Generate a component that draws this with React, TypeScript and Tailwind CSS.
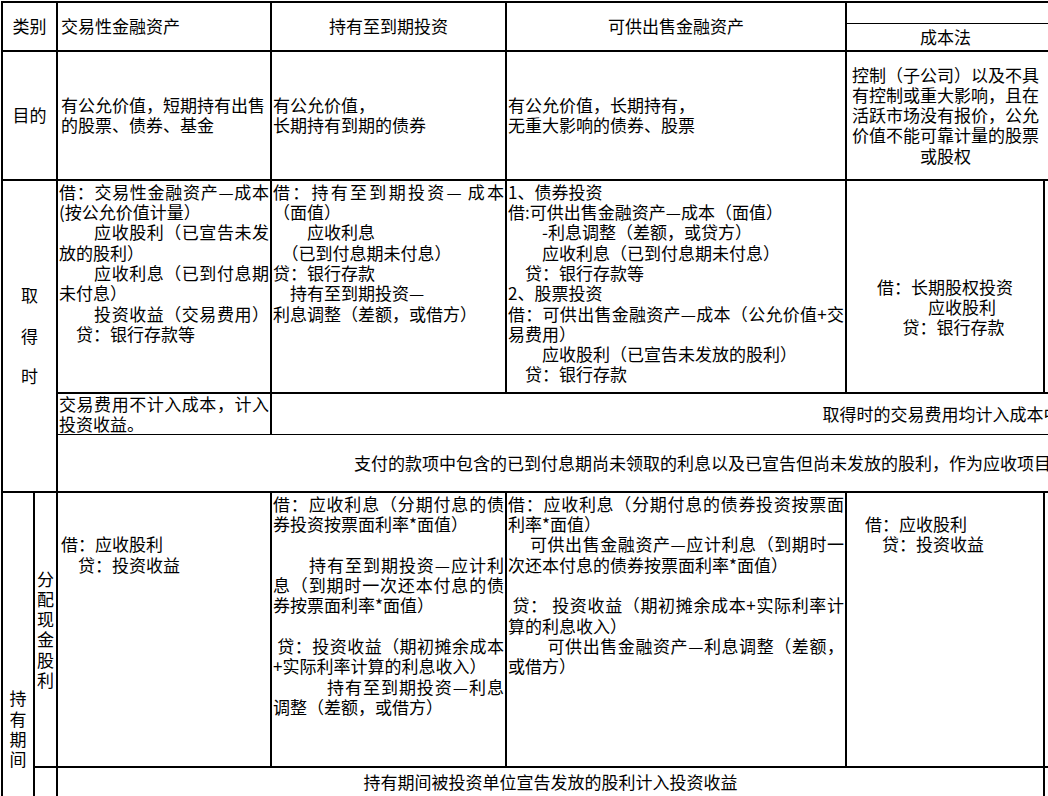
import React from 'react'

// "~" at the start of a line = justified to the full cell width (Excel distributed look)
function Lines({ lines, className = '' }: { lines: string[]; className?: string }) {
  return (
    <div className={className}>
      {lines.map((l, i) => {
        const just = l.startsWith('~')
        const t = just ? l.slice(1) : l
        return (
          <div
            key={i}
            className={just ? 'whitespace-nowrap text-justify [text-align-last:justify]' : 'whitespace-nowrap'}
          >
            {t === '' ? '\u00a0' : t}
          </div>
        )
      })}
    </div>
  )
}

const td = 'border-2 border-black p-0 px-px'
const H = '\u00a0'

export default function App() {
  return (
    <div className="w-[1048px] h-[796px] overflow-hidden bg-white pl-px pt-px text-black font-['Noto_Sans_CJK_SC',sans-serif] text-[17px] leading-[20.3px]">
      <table className="table-fixed border-collapse w-[1609px]">
        <colgroup>
          <col className="w-[32px]" />
          <col className="w-[23px]" />
          <col className="w-[214px]" />
          <col className="w-[235px]" />
          <col className="w-[340px]" />
          <col className="w-[198px]" />
          <col className="w-[567px]" />
        </colgroup>
        <tbody>
          {/* header */}
          <tr className="h-[21px]">
            <td rowSpan={2} colSpan={2} className={`${td} text-center align-middle`}>类别</td>
            <td rowSpan={2} className={`${td} align-middle pl-[3px]`}>交易性金融资产</td>
            <td rowSpan={2} className={`${td} text-center align-middle`}>持有至到期投资</td>
            <td rowSpan={2} className={`${td} text-center align-middle`}>可供出售金融资产</td>
            <td colSpan={2} className={`${td} border-b border-r-0 text-center align-middle`}>长期股权投资</td>
          </tr>
          <tr className="h-[27px]">
            <td className={`${td} border-t border-r-0 text-center align-middle`}>成本法</td>
            <td className={`${td} border-t border-l-0 text-center align-middle`}>权益法</td>
          </tr>

          {/* 目的 */}
          <tr className="h-[129px]">
            <td colSpan={2} className={`${td} text-center align-middle`}>目的</td>
            <td className={`${td} align-middle pl-[3px]`}>
              <Lines lines={['有公允价值，短期持有出售', '的股票、债券、基金']} />
            </td>
            <td className={`${td} align-middle`}>
              <Lines lines={['有公允价值，', '长期持有到期的债券']} />
            </td>
            <td className={`${td} align-middle`}>
              <Lines lines={['有公允价值，长期持有，', '无重大影响的债券、股票']} />
            </td>
            <td className={`${td} border-r-0 text-center align-middle`}>
              <Lines
                lines={[
                  '控制（子公司）以及不具',
                  '有控制或重大影响，且在',
                  '活跃市场没有报价，公允',
                  '价值不能可靠计量的股票',
                  '或股权',
                ]}
              />
            </td>
            <td className={`${td} border-l-0 align-middle`}></td>
          </tr>

          {/* 取得时 */}
          <tr className="h-[213px]">
            <td rowSpan={3} colSpan={2} className={`${td} text-center align-middle`}>
              <Lines lines={['取', '', '得', '', '时']} />
            </td>
            <td className={`${td} align-top pt-[1px]`}>
              <Lines
                lines={[
                  '~借：交易性金融资产—成本',
                  '(按公允价值计量）',
                  '~　　应收股利（已宣告未发',
                  '放的股利）',
                  '~　　应收利息（已到付息期',
                  '未付息）',
                  '~　　投资收益（交易费用）',
                  '　贷：银行存款等',
                ]}
              />
            </td>
            <td className={`${td} align-top pt-[1px]`}>
              <Lines
                lines={[
                  '~借：持有至到期投资—' + H + '成本',
                  '（面值）',
                  '　　应收利息',
                  '　（已到付息期未付息）',
                  '贷：银行存款',
                  '　持有至到期投资—',
                  '利息调整（差额，或借方）',
                ]}
              />
            </td>
            <td className={`${td} align-top pt-[1px]`}>
              <Lines
                lines={[
                  '1、债券投资',
                  '借:可供出售金融资产—成本（面值）',
                  '　　-利息调整（差额，或贷方）',
                  '　　应收利息（已到付息期未付息）',
                  '　贷：银行存款等',
                  '2、股票投资',
                  '~借：可供出售金融资产—成本（公允价值+交',
                  '易费用）',
                  '　　应收股利（已宣告未发放的股利）',
                  '　贷：银行存款',
                ]}
              />
            </td>
            <td className={`${td} text-center align-top pt-[96px]`}>
              <Lines lines={['借：长期股权投资', '　　应收股利', '　贷：银行存款']} />
            </td>
            <td className={`${td} border-l-0 align-top`}></td>
          </tr>
          <tr className="h-[41px]">
            <td className={`${td} border-b align-top`}>
              <Lines lines={['~交易费用不计入成本，计入', '投资收益。']} />
            </td>
            <td colSpan={4} className={`${td} border-b border-r-0 text-center align-middle`}>
              取得时的交易费用均计入成本中
            </td>
          </tr>
          <tr className="h-[57px]">
            <td colSpan={5} className={`${td} border-t-0 border-r-0 align-middle pl-[296px] whitespace-nowrap`}>
              支付的款项中包含的已到付息期尚未领取的利息以及已宣告但尚未发放的股利，作为应收项目单独列示
            </td>
          </tr>

          {/* 持有期间 */}
          <tr className="h-[275px]">
            <td rowSpan={3} className={`${td} text-center align-middle`}>
              <Lines lines={['持', '有', '期', '间']} />
            </td>
            <td className={`${td} text-center align-middle`}>
              <Lines lines={['分', '配', '现', '金', '股', '利']} />
            </td>
            <td className={`${td} align-top pt-[1px] pl-[3px]`}>
              <Lines lines={['', '', '借：应收股利', '　贷：投资收益']} />
            </td>
            <td className={`${td} align-top pt-[1px]`}>
              <Lines
                lines={[
                  '~借：应收利息（分期付息的债',
                  '券投资按票面利率*面值）',
                  '',
                  '~　　持有至到期投资—应计利',
                  '~息（到期时一次还本付息的债',
                  '券按票面利率*面值）',
                  '',
                  '~' + H + '贷：投资收益（期初摊余成本',
                  '+实际利率计算的利息收入）',
                  '~　　　持有至到期投资—利息',
                  '调整（差额，或借方）',
                ]}
              />
            </td>
            <td className={`${td} align-top pt-[1px]`}>
              <Lines
                lines={[
                  '~借：应收利息（分期付息的债券投资按票面',
                  '利率*面值）',
                  '~　' + H + '可供出售金融资产—应计利息（到期时一',
                  '次还本付息的债券按票面利率*面值）',
                  '',
                  '~' + H + '贷：' + H + '投资收益（期初摊余成本+实际利率计',
                  '算的利息收入）',
                  '~　　' + H + '可供出售金融资产—利息调整（差额，',
                  '或借方）',
                ]}
              />
            </td>
            <td className={`${td} align-top pt-[1px]`}>
              <Lines lines={['', '　借：应收股利', '　　贷：投资收益']} />
            </td>
            <td className={`${td} border-l-0 align-top`}></td>
          </tr>
          <tr className="h-[31px]">
            <td className={`${td}`}></td>
            <td colSpan={4} className={`${td} text-center align-middle`}>
              持有期间被投资单位宣告发放的股利计入投资收益
            </td>
            <td className={`${td} border-l-0`}></td>
          </tr>
          <tr className="h-[168px]">
            <td className={`${td} text-center align-middle`}></td>
            <td className={`${td}`}></td>
            <td className={`${td}`}></td>
            <td className={`${td}`}></td>
            <td className={`${td}`}></td>
            <td className={`${td}`}></td>
          </tr>
        </tbody>
      </table>
    </div>
  )
}
